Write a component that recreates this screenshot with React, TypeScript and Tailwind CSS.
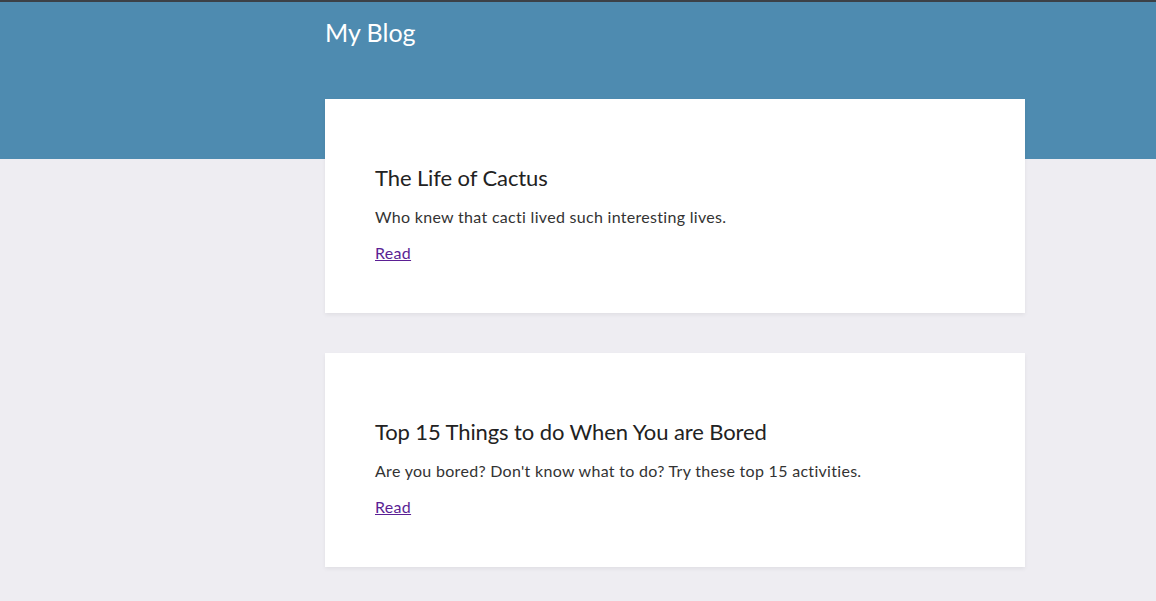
import React from "react";

const posts = [
  {
    title: "The Life of Cactus",
    summary: "Who knew that cacti lived such interesting lives.",
  },
  {
    title: "Top 15 Things to do When You are Bored",
    summary: "Are you bored? Don't know what to do? Try these top 15 activities.",
  },
];

const App: React.FC = () => {
  return (
    <div className="min-h-[601px] bg-[#eeedf2] font-['Lato','Open_Sans',sans-serif]">
      {/* Header */}
      <header className="h-[159px] bg-[#4e8bb0] border-t-2 border-[#3c4147]">
        <div className="ml-[325px] pt-[14px]">
          <h1 className="text-[25px] leading-[32px] text-white font-normal">My Blog</h1>
        </div>
      </header>

      {/* Posts */}
      <main className="ml-[325px] w-[700px] -mt-[60px] flex flex-col gap-[40px] pb-[34px]">
        {posts.map((post) => (
          <article
            key={post.title}
            className="bg-white px-[50px] pt-[66px] pb-[48px] shadow-[0_2px_4px_rgba(0,0,0,0.06)]"
          >
            <h2 className="text-[22px] leading-[26px] text-[#222] tracking-[-0.1px]">{post.title}</h2>
            <p className="mt-[14px] text-[16px] leading-[24px] text-[#333] tracking-[0.3px]">{post.summary}</p>
            <a href="#" className="mt-[12px] inline-block text-[16px] leading-[24px] text-[#5b1f94] underline tracking-[0.3px]">
              Read
            </a>
          </article>
        ))}
      </main>
    </div>
  );
};

export default App;
